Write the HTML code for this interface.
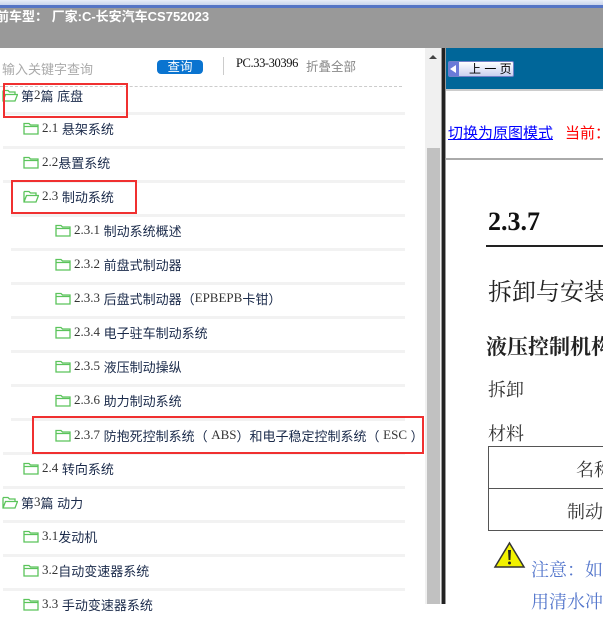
<!DOCTYPE html>
<html><head><meta charset="utf-8"><style>
*{margin:0;padding:0;box-sizing:border-box}
body{width:603px;height:604px;overflow:hidden;position:relative;background:#fff;font-family:"Liberation Sans","Noto Sans CJK SC",sans-serif}
.a{position:absolute;white-space:nowrap}
.row{position:absolute;height:34px;display:flex;align-items:center;font-size:13px;color:#1a2a4a;white-space:nowrap}
.row svg{margin-right:3px;flex:none}
.n{font-family:"Liberation Serif","Noto Sans CJK SC",serif;color:#333}
.sep{position:absolute;height:3px;background:#f2f2f2}
.box{position:absolute;border:2px solid #f03030}
.cj{font-family:"Liberation Serif","Noto Serif CJK SC",serif;color:#222}
</style></head><body>
<div class="a" style="left:0;top:0;width:603px;height:5px;background:linear-gradient(#e8eef8,#c8d4ec)"></div>
<div class="a" style="left:0;top:5px;width:603px;height:3px;background:#5575c5"></div>
<div class="a" style="left:0;top:8px;width:603px;height:40px;background:#999"></div>
<div class="a" style="left:-4px;top:7px;color:#fff;font-size:13px;font-weight:bold;line-height:20px">前车型： 厂家:C-长安汽车CS752023</div>

<div class="a" style="left:2px;top:59px;font-size:13px;color:#aaa">输入关键字查询</div>
<div class="a" style="left:157px;top:60px;width:46px;height:14px;background:#0a74d0;border-radius:4px;color:#fff;font-size:12.5px;line-height:14px;text-align:center">查询</div>
<div class="a" style="left:223px;top:57px;width:1px;height:18px;background:#ccc"></div>
<div class="a n" style="left:236px;top:56px;font-size:12.5px;color:#111;letter-spacing:-0.4px">PC.33-30396</div>
<div class="a" style="left:306px;top:56px;font-size:12.5px;color:#888">折叠全部</div>
<div class="a" style="left:0;top:86px;width:402px;border-top:1px dashed #ccc"></div>

<div class="row" style="left:2px;top:78px"><svg width="16" height="13" viewBox="0 0 16 13"><path d="M1 1.5h5l1.5 1.5H13v2.5M1 1.5v10.5h12l2.5-6.5H3.5L1 12" fill="none" stroke="#5bc45b" stroke-width="1.3"/></svg>第<span class="n">2</span>篇 底盘</div>
<div class="sep" style="left:3px;top:112px;width:402px"></div>
<div class="row" style="left:23px;top:111px"><svg width="16" height="13" viewBox="0 0 16 13"><path d="M1 1.5h5l1.5 1.5H15v9H1z M1 4.5h14" fill="none" stroke="#5bc45b" stroke-width="1.3"/></svg><span class="n">2.1</span>&nbsp;悬架系统</div>
<div class="sep" style="left:3px;top:146px;width:402px"></div>
<div class="row" style="left:23px;top:145px"><svg width="16" height="13" viewBox="0 0 16 13"><path d="M1 1.5h5l1.5 1.5H15v9H1z M1 4.5h14" fill="none" stroke="#5bc45b" stroke-width="1.3"/></svg><span class="n">2.2</span>悬置系统</div>
<div class="sep" style="left:3px;top:180px;width:402px"></div>
<div class="row" style="left:23px;top:179px"><svg width="16" height="13" viewBox="0 0 16 13"><path d="M1 1.5h5l1.5 1.5H13v2.5M1 1.5v10.5h12l2.5-6.5H3.5L1 12" fill="none" stroke="#5bc45b" stroke-width="1.3"/></svg><span class="n">2.3</span>&nbsp;制动系统</div>
<div class="sep" style="left:11px;top:214px;width:394px"></div>
<div class="row" style="left:55px;top:213px"><svg width="16" height="13" viewBox="0 0 16 13"><path d="M1 1.5h5l1.5 1.5H15v9H1z M1 4.5h14" fill="none" stroke="#5bc45b" stroke-width="1.3"/></svg><span class="n">2.3.1</span>&nbsp;制动系统概述</div>
<div class="sep" style="left:11px;top:248px;width:394px"></div>
<div class="row" style="left:55px;top:247px"><svg width="16" height="13" viewBox="0 0 16 13"><path d="M1 1.5h5l1.5 1.5H15v9H1z M1 4.5h14" fill="none" stroke="#5bc45b" stroke-width="1.3"/></svg><span class="n">2.3.2</span>&nbsp;前盘式制动器</div>
<div class="sep" style="left:11px;top:282px;width:394px"></div>
<div class="row" style="left:55px;top:281px"><svg width="16" height="13" viewBox="0 0 16 13"><path d="M1 1.5h5l1.5 1.5H15v9H1z M1 4.5h14" fill="none" stroke="#5bc45b" stroke-width="1.3"/></svg><span class="n">2.3.3</span>&nbsp;后盘式制动器（<span class="n">EPBEPB</span> 卡钳）</div>
<div class="sep" style="left:11px;top:316px;width:394px"></div>
<div class="row" style="left:55px;top:315px"><svg width="16" height="13" viewBox="0 0 16 13"><path d="M1 1.5h5l1.5 1.5H15v9H1z M1 4.5h14" fill="none" stroke="#5bc45b" stroke-width="1.3"/></svg><span class="n">2.3.4</span>&nbsp;电子驻车制动系统</div>
<div class="sep" style="left:11px;top:350px;width:394px"></div>
<div class="row" style="left:55px;top:349px"><svg width="16" height="13" viewBox="0 0 16 13"><path d="M1 1.5h5l1.5 1.5H15v9H1z M1 4.5h14" fill="none" stroke="#5bc45b" stroke-width="1.3"/></svg><span class="n">2.3.5</span>&nbsp;液压制动操纵</div>
<div class="sep" style="left:11px;top:384px;width:394px"></div>
<div class="row" style="left:55px;top:383px"><svg width="16" height="13" viewBox="0 0 16 13"><path d="M1 1.5h5l1.5 1.5H15v9H1z M1 4.5h14" fill="none" stroke="#5bc45b" stroke-width="1.3"/></svg><span class="n">2.3.6</span>&nbsp;助力制动系统</div>
<div class="sep" style="left:11px;top:418px;width:394px"></div>
<div class="row" style="left:55px;top:418px"><svg width="16" height="13" viewBox="0 0 16 13"><path d="M1 1.5h5l1.5 1.5H15v9H1z M1 4.5h14" fill="none" stroke="#5bc45b" stroke-width="1.3"/></svg><span class="n">2.3.7</span>&nbsp;防抱死控制系统（&nbsp;<span class="n">ABS</span>）和电子稳定控制系统（&nbsp;<span class="n">ESC</span>&nbsp;）</div>
<div class="sep" style="left:3px;top:452px;width:402px"></div>
<div class="row" style="left:23px;top:451px"><svg width="16" height="13" viewBox="0 0 16 13"><path d="M1 1.5h5l1.5 1.5H15v9H1z M1 4.5h14" fill="none" stroke="#5bc45b" stroke-width="1.3"/></svg><span class="n">2.4</span>&nbsp;转向系统</div>
<div class="sep" style="left:3px;top:486px;width:402px"></div>
<div class="row" style="left:2px;top:485px"><svg width="16" height="13" viewBox="0 0 16 13"><path d="M1 1.5h5l1.5 1.5H13v2.5M1 1.5v10.5h12l2.5-6.5H3.5L1 12" fill="none" stroke="#5bc45b" stroke-width="1.3"/></svg>第<span class="n">3</span>篇 动力</div>
<div class="sep" style="left:3px;top:520px;width:402px"></div>
<div class="row" style="left:23px;top:519px"><svg width="16" height="13" viewBox="0 0 16 13"><path d="M1 1.5h5l1.5 1.5H15v9H1z M1 4.5h14" fill="none" stroke="#5bc45b" stroke-width="1.3"/></svg><span class="n">3.1</span>发动机</div>
<div class="sep" style="left:3px;top:554px;width:402px"></div>
<div class="row" style="left:23px;top:553px"><svg width="16" height="13" viewBox="0 0 16 13"><path d="M1 1.5h5l1.5 1.5H15v9H1z M1 4.5h14" fill="none" stroke="#5bc45b" stroke-width="1.3"/></svg><span class="n">3.2</span>自动变速器系统</div>
<div class="sep" style="left:3px;top:588px;width:402px"></div>
<div class="row" style="left:23px;top:587px"><svg width="16" height="13" viewBox="0 0 16 13"><path d="M1 1.5h5l1.5 1.5H15v9H1z M1 4.5h14" fill="none" stroke="#5bc45b" stroke-width="1.3"/></svg><span class="n">3.3</span>&nbsp;手动变速器系统</div>

<div class="box" style="left:3px;top:83px;width:125px;height:35px"></div>
<div class="box" style="left:11px;top:180px;width:126px;height:34px"></div>
<div class="box" style="left:32px;top:416px;width:392px;height:38px"></div>

<div class="a" style="left:425px;top:48px;width:16px;height:556px;background:#f0f0f0"></div>
<div class="a" style="left:429px;top:55px;width:0;height:0;border-left:4px solid transparent;border-right:4px solid transparent;border-bottom:4px solid #444"></div>
<div class="a" style="left:427px;top:148px;width:13px;height:456px;background:#c1c1c1"></div>
<div class="a" style="left:441px;top:48px;width:5px;height:556px;background:linear-gradient(90deg,#999 0,#999 1px,#222 1px,#222 4px,#999 4px)"></div>

<div class="a" style="left:446px;top:48px;width:157px;height:41px;background:#006699"></div>
<div class="a" style="left:448px;top:61px;width:66px;height:16px;background:linear-gradient(#fff,#c8d0f0);border:1px solid #7080c8;border-radius:2px;font-size:12px;line-height:14px;color:#000;padding-left:20px">上 一 页</div>
<div class="a" style="left:449px;top:62px;width:10px;height:14px;background:#6a7ad8"></div>
<div class="a" style="left:450px;top:65px;width:0;height:0;border-top:4px solid transparent;border-bottom:4px solid transparent;border-right:6px solid #fff"></div>
<div class="a" style="left:446px;top:89px;width:157px;height:2px;background:#ccc"></div>
<div class="a" style="left:448px;top:122px;font-size:15px;color:#00f;text-decoration:underline">切换为原图模式</div>
<div class="a" style="left:565px;top:122px;font-size:15px;color:#f00">当前：</div>
<div class="a" style="left:446px;top:158px;width:157px;height:2px;background:#aaa"></div>

<div class="a" style="left:488px;top:207px;font-family:'Liberation Serif',serif;font-weight:bold;font-size:26px;color:#111">2.3.7</div>
<div class="a" style="left:486px;top:245px;width:117px;height:2px;background:#222"></div>
<div class="a cj" style="left:488px;top:272px;font-size:24px">拆卸与安装</div>
<div class="a cj" style="left:486px;top:331px;font-size:21px;font-weight:bold">液压控制机构</div>
<div class="a cj" style="left:488px;top:376px;font-size:18px;color:#333">拆卸</div>
<div class="a cj" style="left:488px;top:420px;font-size:18px;color:#333">材料</div>
<div class="a" style="left:488px;top:446px;width:130px;height:85px;border:1px solid #555"></div>
<div class="a" style="left:488px;top:488px;width:130px;height:1px;background:#555"></div>
<div class="a cj" style="left:576px;top:456px;font-size:18px;color:#333">名称</div>
<div class="a cj" style="left:567px;top:498px;font-size:18px;color:#333">制动</div>
<svg class="a" style="left:493px;top:541px" width="33" height="28" viewBox="0 0 33 28"><path d="M16.5 2L31 26H2z" fill="#f2f200" stroke="#333" stroke-width="1.5"/><path d="M15 9h3l-.6 10h-1.8z" fill="#222"/><circle cx="16.5" cy="22" r="1.5" fill="#222"/></svg>
<div class="a cj" style="left:531px;top:556px;font-size:18px;color:#5577cc">注意：如</div>
<div class="a cj" style="left:531px;top:588px;font-size:18px;color:#5577cc">用清水冲</div>
</body></html>
